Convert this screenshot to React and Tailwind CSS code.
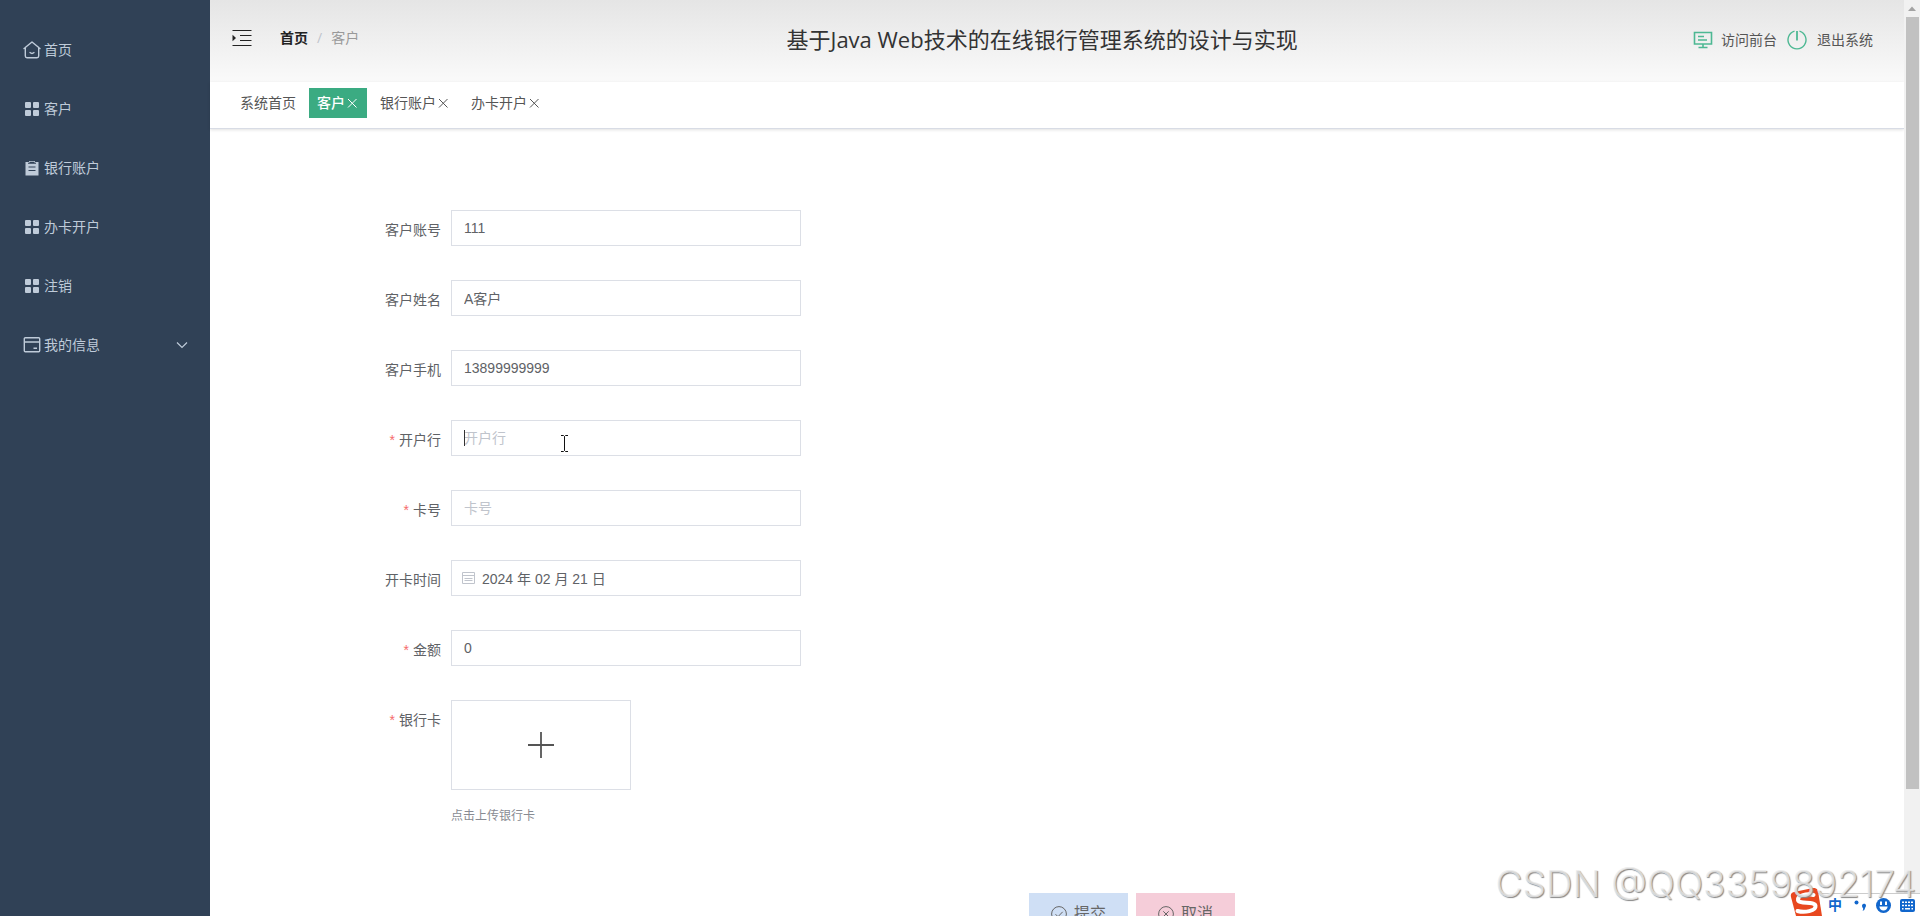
import { useState } from "react";

const menus = [
    { title: "首页", icon: HomeIcon },
    { title: "客户", icon: GridIcon },
    { title: "银行账户", icon: OrderIcon },
    { title: "办卡开户", icon: GridIcon },
    { title: "注销", icon: GridIcon },
    { title: "我的信息", icon: CardIcon, children: true },
];

const tabs = [
    { title: "系统首页" },
    { title: "客户", closable: true, active: true },
    { title: "银行账户", closable: true },
    { title: "办卡开户", closable: true },
];

const initialForm = {
    kehuzhanghao: "111",
    kehuxingming: "A客户",
    kehushouji: "13899999999",
    kaihuhang: "",
    kahao: "",
    kaikashijian: "2024 年 02 月 21 日",
    jine: "0",
};

const fields = [
    { name: "kehuzhanghao", label: "客户账号" },
    { name: "kehuxingming", label: "客户姓名" },
    { name: "kehushouji", label: "客户手机" },
    { name: "kaihuhang", label: "开户行", required: true, caret: true },
    { name: "kahao", label: "卡号", required: true },
    { name: "kaikashijian", label: "开卡时间", date: true },
    { name: "jine", label: "金额", required: true },
];

function HomeIcon() {
    return (
        <svg width="18" height="18" viewBox="0 0 18 18" fill="none" stroke="currentColor" strokeWidth="1.4" strokeLinejoin="round" strokeLinecap="round">
            <path d="M1 7.500 9 1l8 6.500M2.300 6.500V15q0 1.700 1.700 1.700h10q1.700 0 1.700-1.700V6.500" />
            <path d="M7 11.600Q9 13.400 11 11.600" />
        </svg>
    );
}

function GridIcon() {
    return (
        <svg width="18" height="18" viewBox="0 0 18 18" fill="currentColor">
            <rect x="2" y="2" width="6" height="6" rx="1" />
            <rect x="10" y="2" width="6" height="6" rx="1" />
            <rect x="2" y="10" width="6" height="6" rx="1" />
            <rect x="10" y="10" width="6" height="6" rx="1" />
        </svg>
    );
}

function OrderIcon() {
    return (
        <svg width="18" height="18" viewBox="0 0 18 18">
            <path fill="currentColor" fillRule="evenodd" d="M2.500 3H6V2h6v1h3.500v13.500h-13ZM5 3.800v1h8v-1h-1.500v-1h-5v1ZM5.500 7.500v1h7v-1ZM5.500 11v1h7v-1Z" />
        </svg>
    );
}

function CardIcon() {
    return (
        <svg width="18" height="18" viewBox="0 0 18 18" fill="none" stroke="currentColor" strokeWidth="1.400">
            <rect x="1.300" y="1.800" width="15.400" height="14" rx="1" />
            <path d="M1.300 6h15.400M10.500 12.300h3.500" />
        </svg>
    );
}

function CloseIcon() {
    return (
        <svg width="14" height="14" viewBox="0 0 14 14" fill="none" stroke="currentColor" strokeWidth="1">
            <path d="m3 3 8.500 8.500M11.500 3 3 11.500" />
        </svg>
    );
}

function Sidebar() {
    return (
        <aside className="w-[210px] shrink-0 bg-[#304156] pt-5 text-[#bfcbd9]">
            <ul>
                {menus.map((m) => (
                    <li key={m.title}>
                        <a href="#" className="flex h-[59px] items-center gap-[3px] pr-5 pl-[23px] text-sm">
                            <m.icon />
                            <span>{m.title}</span>
                            {m.children && (
                                <svg className="ml-auto" width="16" height="16" viewBox="0 0 16 16" fill="none" stroke="currentColor" strokeWidth="1.200">
                                    <path d="m3 5.500 5 5 5-5" />
                                </svg>
                            )}
                        </a>
                    </li>
                ))}
            </ul>
        </aside>
    );
}

function Header() {
    return (
        <header className="flex h-[82px] shrink-0 items-center bg-linear-to-b from-[#e5e5e5] to-[#fafafa] pr-[31px] pb-[2px] pl-[22px] text-sm text-[#555]">
            <button aria-label="收起菜单" className="mb-1 text-[#222]">
                <svg width="20" height="20" viewBox="0 0 20 20" fill="none" stroke="currentColor" strokeWidth="1.200">
                    <path d="M.5 2.500h19M8 7.500h11.500M8 12.500h11.500M.5 17.500h19" />
                    <path fill="currentColor" stroke="none" d="M.5 6.800v6.400L4 10Z" />
                </svg>
            </button>
            <nav className="mr-8 mb-1 ml-7 flex items-center">
                <a href="#" className="font-bold text-[#222]">首页</a>
                <span className="mx-[9px] text-[#c0c4cc]">/</span>
                <span className="text-[#999]">客户</span>
            </nav>
            <h1 className="flex-1 text-center text-[22px] text-[#333]">基于Java Web技术的在线银行管理系统的设计与实现</h1>
            <a href="#" className="flex items-center gap-2">
                <svg width="20" height="20" viewBox="0 0 20 20" fill="none" stroke="#4db893" strokeWidth="1.600">
                    <path d="M1.500 2.500h17v11.500h-17ZM10 14v3.500M5.500 17.500h9" />
                    <path d="M5 6.500h6M5 10h9" />
                </svg>
                访问前台
            </a>
            <a href="#" className="ml-[9px] flex items-center gap-[9px]">
                <svg width="22" height="22" viewBox="0 0 22 22" fill="none" stroke="#4db893">
                    <path strokeWidth="1.400" d="M8.500 2.200a9 9 0 1 0 5 0" />
                    <path strokeWidth="1.800" d="M11 2v9.500" />
                </svg>
                退出系统
            </a>
        </header>
    );
}

function TagsView() {
    return (
        <div className="flex h-[47px] shrink-0 gap-[5px] border-b border-[#d8dce5] pt-[6px] pl-[22px] text-sm shadow-[0_1px_3px_rgba(0,0,0,0.12)]">
            {tabs.map((t) => (
                <button
                    key={t.title}
                    className={t.active ? "flex h-[30px] items-center bg-[#3bab82] px-2 font-medium text-white" : "flex h-[30px] items-center px-2 text-[#555]"}
                >
                    {t.title}
                    {t.closable && <CloseIcon />}
                </button>
            ))}
        </div>
    );
}

function Label({ htmlFor, required, children }) {
    return (
        <label htmlFor={htmlFor} className="h-9 w-[91px] shrink-0 pr-[10px] text-right text-sm leading-10 text-[#606266]">
            {required && <span className="mr-1 text-[#f56c6c]">*</span>}
            {children}
        </label>
    );
}

function Field({ field, value, onChange }) {
    return (
        <div className="mb-[34px] flex">
            <Label htmlFor={field.name} required={field.required}>{field.label}</Label>
            <div className="relative w-[350px]">
                <input
                    id={field.name}
                    type="text"
                    value={value}
                    placeholder={field.label}
                    onChange={(e) => onChange(field.name, e.target.value)}
                    className={`h-9 w-full border border-[#dcdfe6] bg-white text-sm text-[#606266] outline-none placeholder:text-[#c0c4cc] ${field.date ? "pr-3 pl-[30px]" : "px-3"}`}
                />
                {field.date && (
                    <svg className="absolute top-[11px] left-[11px]" width="14" height="14" viewBox="0 0 14 14" fill="none" stroke="#c0c4cc">
                        <path d="M.5 1.500h12v11H.5ZM.5 4.500h12M2.500 7.500h8M2.500 9.500h8" />
                    </svg>
                )}
                {field.caret && (
                    <>
                        <span className="absolute top-[10px] left-[13px] h-4 w-px bg-[#333]" />
                        <svg className="absolute top-[15px] left-[109px]" width="9" height="17" viewBox="0 0 9 17" fill="none" stroke="#111">
                            <path d="M1 .5h2.500l1 1 1-1H8M4.500 1.500v14M1 16.500h2.500l1-1 1 1H8" />
                        </svg>
                    </>
                )}
            </div>
        </div>
    );
}

function AccountForm() {
    const [form, setForm] = useState(initialForm);
    const change = (name, value) => setForm({ ...form, [name]: value });

    return (
        <form className="pt-[81px] pl-[150px]" onSubmit={(e) => e.preventDefault()}>
            {fields.map((f) => (
                <Field key={f.name} field={f} value={form[f.name]} onChange={change} />
            ))}

            <div className="flex">
                <Label htmlFor="yinhangka" required>银行卡</Label>
                <div>
                    <button id="yinhangka" type="button" className="flex h-[90px] w-[180px] items-center justify-center border border-[#dcdfe6]">
                        <svg width="28" height="28" viewBox="0 0 28 28" stroke="#555" strokeWidth="1.800">
                            <path d="M14 1v26M1 14h26" />
                        </svg>
                    </button>
                    <p className="mt-4 text-xs leading-5 text-[#888b92]">点击上传银行卡</p>
                </div>
            </div>

            <div className="mt-[67px] flex justify-center gap-2 pb-10 text-base text-[#666]">
                <button type="submit" className="flex h-[42px] items-center gap-[7px] bg-[#cfdff5] px-[22px]">
                    <svg width="16" height="16" viewBox="0 0 16 16" fill="none" stroke="currentColor">
                        <circle cx="8" cy="8" r="7.400" />
                        <path d="m4.500 8.200 2.500 2.500 4.700-4.900" />
                    </svg>
                    提交
                </button>
                <button type="button" className="flex h-[42px] items-center gap-[7px] bg-[#f5cdd9] px-[22px]">
                    <svg width="16" height="16" viewBox="0 0 16 16" fill="none" stroke="currentColor">
                        <circle cx="8" cy="8" r="7.400" />
                        <path d="m5.300 5.300 5.400 5.400M10.700 5.300l-5.400 5.400" />
                    </svg>
                    取消
                </button>
            </div>
        </form>
    );
}

function Scrollbar() {
    return (
        <div className="flex w-4 shrink-0 flex-col items-center bg-[#f1f1f1]">
            <svg className="shrink-0" width="16" height="17" viewBox="0 0 16 17">
                <path fill="#a3a3a3" d="m4 11 4-4.500 4 4.500Z" />
            </svg>
            <div className="h-[84.3%] w-[13px] bg-[#c1c1c1]" />
        </div>
    );
}

// input method bar docked in the bottom right corner
function InputMethodBar() {
    return (
        <div className="absolute right-0 bottom-0 flex h-[23px] w-[116px] items-center border-t border-[#ccc] bg-white pr-[5px] pl-6 text-[#1166cc]">
            <svg className="absolute bottom-0 -left-[14px]" width="32" height="28" viewBox="0 0 32 28">
                <path fill="#e8481f" d="M4 4 23 0q4-.5 5 3l4 25H6L1 9q-1-4 3-5Z" />
                <path fill="none" stroke="#fff" strokeWidth="4" strokeLinecap="round" d="M23.500 7C17 5 7 7.500 8 12s17 1 17.500 6-11 7-18 5" />
            </svg>
            <span className="text-sm leading-5 font-bold">中</span>
            <svg className="ml-3" width="12" height="16" viewBox="0 0 12 16" fill="currentColor">
                <circle cx="2.500" cy="5.500" r="2" />
                <path d="M8 8.500a2 2 0 1 1 3.500 1.500Q11 13 8.500 14q1-1.500.5-3-1-.5-1-2.500Z" />
            </svg>
            <svg className="ml-[10px]" width="15" height="15" viewBox="0 0 15 15">
                <circle cx="7.500" cy="7.500" r="7.500" fill="currentColor" />
                <path fill="#fff" d="M4 3.500h2V7H4ZM9 3.500h2V7H9ZM3.300 8.500h8.400Q11 12.500 7.500 12.500T3.300 8.500Z" />
            </svg>
            <svg className="ml-auto" width="15" height="13" viewBox="0 0 15 13">
                <rect width="15" height="13" rx="2" fill="currentColor" />
                <path stroke="#fff" strokeWidth="1.500" strokeDasharray="2 1" d="M2 3.200h11M2 6.400h11" />
                <path stroke="#fff" strokeWidth="1.500" d="M2 9.800h1.500M5 9.800h5M11.500 9.800H13" />
            </svg>
        </div>
    );
}

export default function App() {
    return (
        <div className="relative flex h-screen overflow-hidden bg-white font-['Open_Sans','Noto_Sans_CJK_SC',sans-serif]">
            <Sidebar />
            <div className="flex min-w-0 flex-1 flex-col">
                <Header />
                <TagsView />
                <main className="flex-1 overflow-hidden font-['Liberation_Sans','Noto_Sans_CJK_SC',sans-serif]">
                    <AccountForm />
                </main>
            </div>
            <Scrollbar />
            <InputMethodBar />
            <div className="absolute right-1 bottom-2 font-['Inter',sans-serif] text-[37px] leading-[48px] font-light text-[#ececec]/80 [text-shadow:1px_1px_1px_#888]">
                CSDN @QQ3359892174
            </div>
        </div>
    );
}
